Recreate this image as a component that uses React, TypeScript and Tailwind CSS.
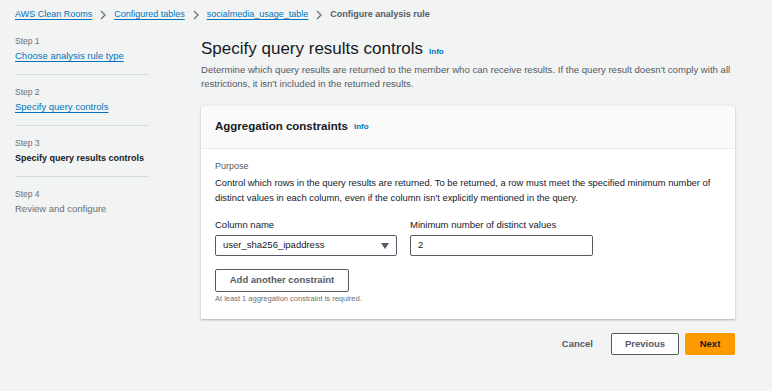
import React from 'react';

const font = { fontFamily: '"Liberation Sans", Arial, sans-serif' };

const Crumb: React.FC<{ label: string; last?: boolean }> = ({ label, last }) => (
  <>
    {last ? (
      <span className="font-bold text-[#545b64]">{label}</span>
    ) : (
      <>
        <a className="text-[#0073bb] underline underline-offset-2">{label}</a>
        <svg width="8" height="10" viewBox="0 0 8 10" className="mx-[7px]">
          <path d="M2 1l4 4-4 4" fill="none" stroke="#687078" strokeWidth="1.3" />
        </svg>
      </>
    )}
  </>
);

const Step: React.FC<{ n: number; label: string; kind: 'link' | 'current' | 'todo'; divider?: boolean }> = ({ n, label, kind, divider }) => (
  <div className={`pb-[10px] ${divider ? 'border-b border-[#d5dbdb] mb-[10px]' : ''}`}>
    <div className="text-[8.5px] text-[#687078] leading-[14px]">Step {n}</div>
    <div
      className={`leading-[16px] whitespace-nowrap ${
        kind === 'link'
          ? 'text-[9.5px] text-[#0073bb] underline underline-offset-2'
          : kind === 'current'
          ? 'text-[9px] font-bold text-[#16191f]'
          : 'text-[9.5px] text-[#687078]'
      }`}
    >
      {label}
    </div>
  </div>
);

export default function App() {
  return (
    <div className="w-[772px] h-[391px] bg-[#f2f3f3] text-[#16191f] overflow-hidden" style={font}>
      <div className="flex items-center h-[30px] px-[15px] text-[9px]">
        <Crumb label="AWS Clean Rooms" />
        <Crumb label="Configured tables" />
        <Crumb label="socialmedia_usage_table" />
        <Crumb label="Configure analysis rule" last />
      </div>

      <div className="flex">
        <div className="w-[134px] ml-[15px] pt-[4px] shrink-0">
          <Step n={1} label="Choose analysis rule type" kind="link" divider />
          <Step n={2} label="Specify query controls" kind="link" divider />
          <Step n={3} label="Specify query results controls" kind="current" divider />
          <Step n={4} label="Review and configure" kind="todo" />
        </div>

        <div className="ml-[52px] w-[534px]">
          <div className="flex items-baseline gap-[6px] mt-[6px]">
            <h1 className="text-[17px] leading-[26px]">Specify query results controls</h1>
            <span className="text-[8px] font-bold text-[#0073bb]">Info</span>
          </div>
          <p className="text-[9.6px] leading-[14px] text-[#545b64] mt-[1px] -mr-[8px]">
            Determine which query results are returned to the member who can receive results. If the query result doesn't comply with all
            restrictions, it isn't included in the returned results.
          </p>

          <div className="mt-[14px] bg-white shadow-[0_1px_2px_rgba(0,28,36,0.3)] border-t border-[#eaeded]">
            <div className="h-[43px] bg-[#fafafa] border-b border-[#eaeded] flex items-center px-[14px] gap-[6px]">
              <span className="text-[11.5px] font-bold">Aggregation constraints</span>
              <span className="text-[8px] font-bold text-[#0073bb]">Info</span>
            </div>
            <div className="px-[14px] pt-[10px] pb-[14px]">
              <div className="text-[9px] text-[#545b64] leading-[14px]">Purpose</div>
              <p className="text-[9.4px] leading-[15px] mt-[2px]">
                Control which rows in the query results are returned. To be returned, a row must meet the specified minimum number
                of distinct values in each column, even if the column isn't explicitly mentioned in the query.
              </p>

              <div className="flex gap-[13px] mt-[13px]">
                <div className="w-[182px]">
                  <div className="text-[9.5px] leading-[14px] mb-[3px]">Column name</div>
                  <div className="h-[21px] border border-[#545b64] rounded-[2px] flex items-center justify-between px-[7px] text-[9.5px]">
                    <span>user_sha256_ipaddress</span>
                    <svg width="8" height="6" viewBox="0 0 8 6">
                      <path d="M0 0h8L4 6z" fill="#545b64" />
                    </svg>
                  </div>
                </div>
                <div className="w-[183px]">
                  <div className="text-[9.5px] leading-[14px] mb-[3px]">Minimum number of distinct values</div>
                  <div className="h-[21px] border border-[#545b64] rounded-[2px] flex items-center px-[7px] text-[9.5px]">2</div>
                </div>
              </div>

              <button className="mt-[13px] h-[23px] w-[134px] border border-[#545b64] rounded-[2px] text-[9.5px] font-bold text-[#545b64] bg-white">
                Add another constraint
              </button>
              <div className="text-[7.5px] text-[#687078] leading-[12px] mt-[1px]">At least 1 aggregation constraint is required.</div>
            </div>
          </div>

          <div className="flex justify-end items-center mt-[14px] text-[9.5px] font-bold">
            <span className="text-[#545b64] mr-[18px]">Cancel</span>
            <button className="h-[22px] w-[68px] border border-[#545b64] rounded-[2px] bg-white text-[#545b64] mr-[6px]">Previous</button>
            <button className="h-[22px] w-[50px] rounded-[2px] bg-[#ff9900] text-[#16191f]">Next</button>
          </div>
        </div>
      </div>
    </div>
  );
}
